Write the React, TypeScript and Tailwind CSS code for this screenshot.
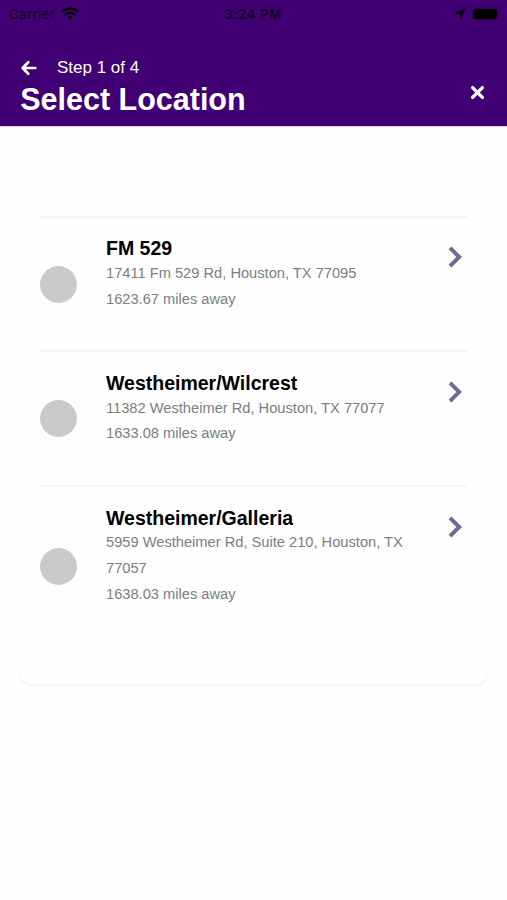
const locations = [
  { name: 'FM 529', address: '17411 Fm 529 Rd, Houston, TX 77095', distance: '1623.67 miles away' },
  { name: 'Westheimer/Wilcrest', address: '11382 Westheimer Rd, Houston, TX 77077', distance: '1633.08 miles away' },
  { name: 'Westheimer/Galleria', address: '5959 Westheimer Rd, Suite 210, Houston, TX 77057', distance: '1638.03 miles away' },
];

function StatusBar() {
  return (
    <div className="grid h-7 grid-cols-3 items-center pl-[9px] pr-[10px] font-['Inter',sans-serif] text-[13.2px] leading-7 text-[#10001f]">
      <div className="flex items-center gap-[6px]">
        <span className="tracking-[0.4px]">Carrier</span>
        <svg className="-mt-0.5" width="18" height="13" viewBox="0 0 18 13" fill="none" stroke="#08000f" strokeWidth="2.5">
          <path d="M1 4.7a11.3 11.3 0 0 1 16 0" />
          <path d="M4 7.8a7.1 7.1 0 0 1 10 0" />
          <path d="M9 12.8 6.2 10a4 4 0 0 1 5.6 0Z" fill="#08000f" stroke="none" />
        </svg>
      </div>
      <span className="text-center font-semibold tracking-[0.6px]">3:24 PM</span>
      <div className="flex items-center justify-end gap-[7px]">
        <svg width="12" height="12" viewBox="0 0 12 12" fill="#08000f" stroke="#08000f" strokeWidth="0.7" strokeLinejoin="round">
          <path d="M11.2.8 6.5 11.2V5.8L.6 5.5Z" />
        </svg>
        <span className="-mt-px h-[10px] w-6 rounded-[3px] bg-black shadow-[0_0_2px_#08000f]" />
      </div>
    </div>
  );
}

function Header() {
  return (
    <header className="h-[126px] bg-[#400073] text-white">
      <StatusBar />
      <div className="flex justify-between pl-[21px] pr-[22px] pt-7">
        <div>
          <div className="flex h-6 items-center">
            <button aria-label="Back" className="mr-5 block">
              <svg width="16" height="16" viewBox="0 0 16 16" fill="none" stroke="white" strokeWidth="2.7" strokeLinecap="round" strokeLinejoin="round">
                <path d="M7.2 2.2 1.7 8l5.5 5.8M2 8h12.3" />
              </svg>
            </button>
            <span className="text-[17px] leading-6">Step 1 of 4</span>
          </div>
          <h1 className="-ml-[0.8px] -mt-px whitespace-nowrap text-[30.5px] font-bold leading-10">Select Location</h1>
        </div>
        <button aria-label="Close" className="mt-7 block h-4">
          <svg width="15" height="15" viewBox="0 0 15 15" fill="none" stroke="white" strokeWidth="3.3" strokeLinecap="round">
            <path d="m2.6 2.6 9.8 9.8m0-9.8-9.8 9.8" />
          </svg>
        </button>
      </div>
    </header>
  );
}

function LocationRow({ name, address, distance }: { name: string; address: string; distance: string }) {
  return (
    <li className="flex border-t-2 border-[#f5f5f5] pb-[16.1px] pt-[18.7px]">
      <span className="-mt-[2px] mr-[29px] h-[37px] w-[37px] shrink-0 self-center rounded-full bg-[#cacaca]" />
      <div className="w-[312px] pb-[21.6px]">
        <h2 className="text-[19.5px] font-bold leading-6 text-black">{name}</h2>
        <div className="pt-[0.8px] text-[14.67px] leading-[25.7px] text-[#7b7f82]">
          <p>{address}</p>
          <p>{distance}</p>
        </div>
      </div>
      <svg className="ml-auto mr-[3px] mt-[9px] shrink-0" width="17" height="24" viewBox="0 0 17 24" fill="none" stroke="#706c93" strokeWidth="4">
        <path d="m3 2.8 9.2 9.2L3 21.2" />
      </svg>
    </li>
  );
}

export default function App() {
  return (
    <div className="min-h-[900px] w-full bg-[#fefefe] font-['Liberation_Sans',Arial,sans-serif]">
      <Header />
      <div className="h-px bg-[#e3d8ec]" />
      <main className="px-5 pt-[48.7px]">
        <section className="h-[508px] rounded-xl bg-[#fefefe] px-5 pt-10 shadow-[0_2px_2px_rgba(0,0,0,0.055)] [clip-path:inset(5px_-5px_-8px_-5px)]">
          <ul>
            {locations.map((location) => (
              <LocationRow key={location.name} {...location} />
            ))}
          </ul>
        </section>
      </main>
    </div>
  );
}
